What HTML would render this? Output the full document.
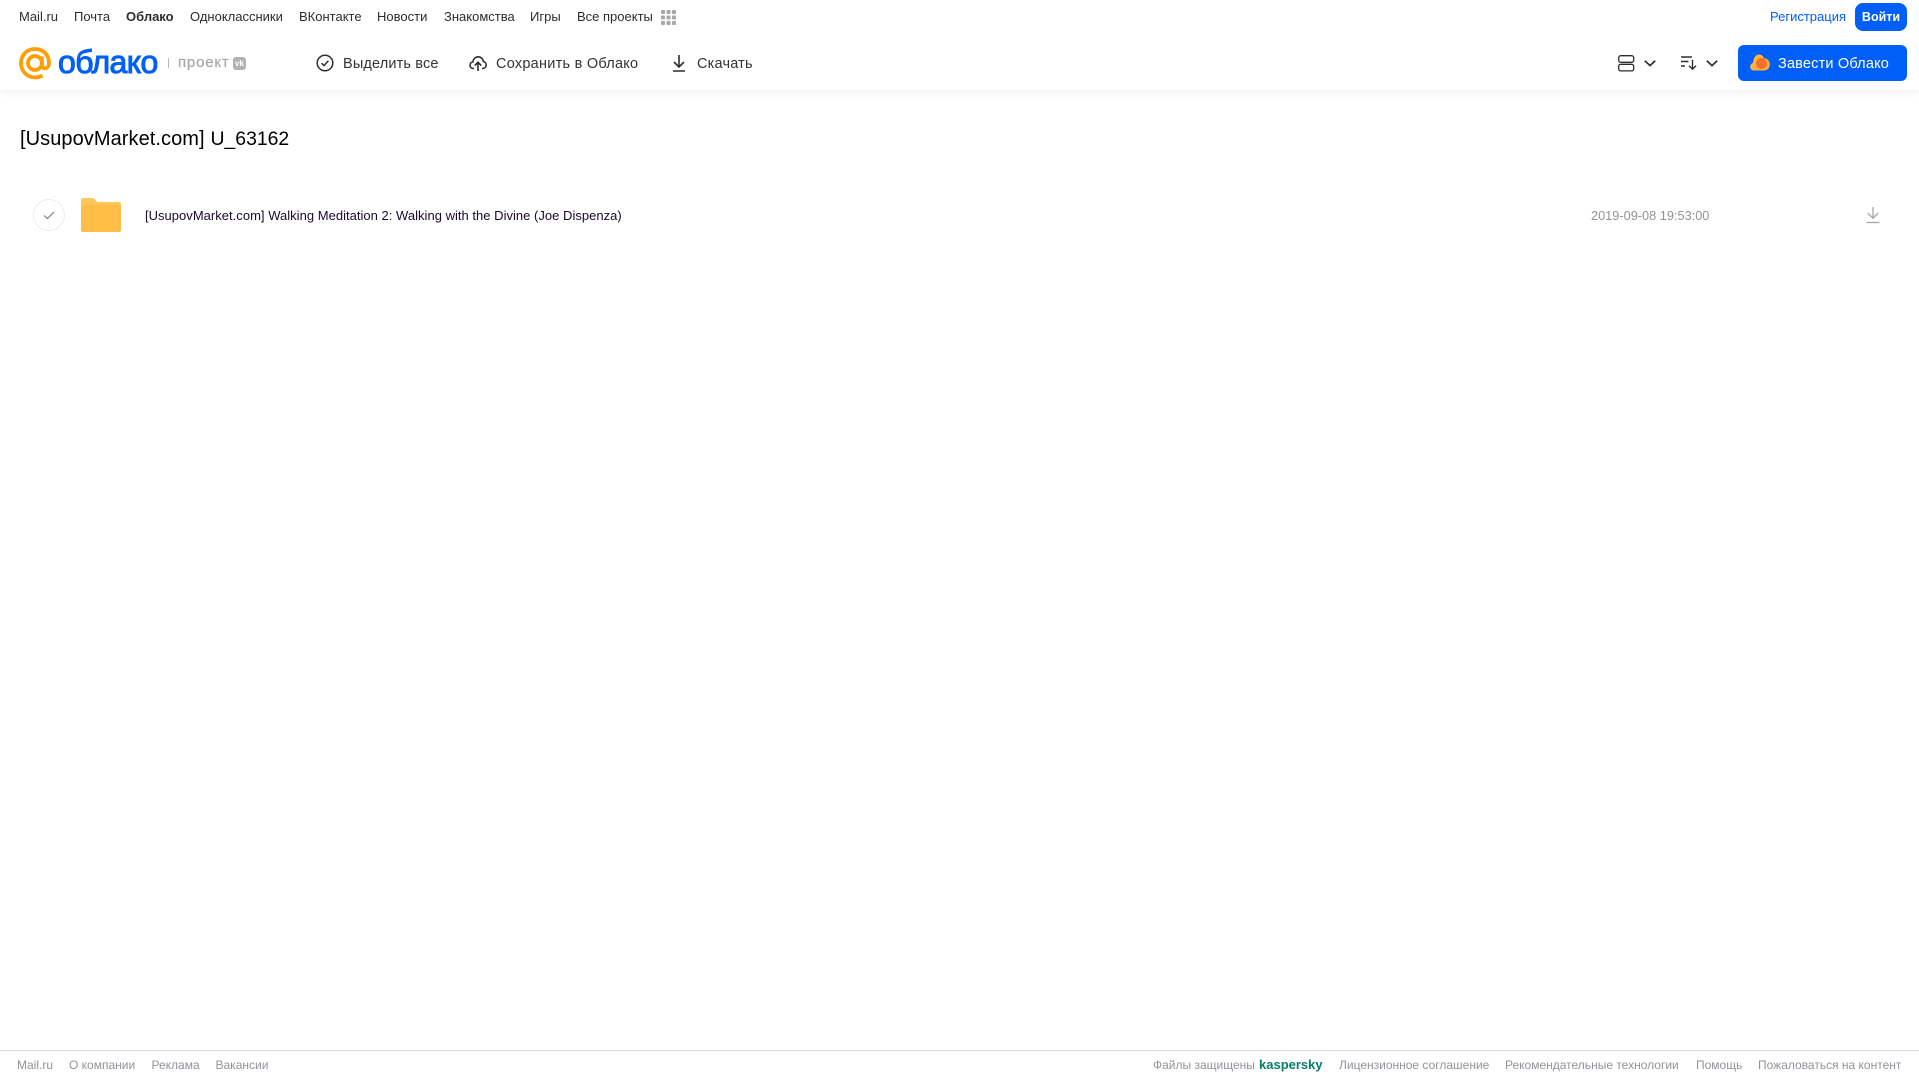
<!DOCTYPE html>
<html lang="ru"><head><meta charset="utf-8"><title>Облако</title>
<style>
html,body{margin:0;padding:0;background:#fff;width:1919px;height:1079px;overflow:hidden;font-family:"Liberation Sans",sans-serif}
.t{position:absolute;white-space:nowrap;line-height:20px}
.n{top:7px;font-size:13px;color:#2c2d2e}
.a{top:54px;font-size:14.5px;color:#333;letter-spacing:.2px}
.f{top:1055px;font-size:12px;color:#919399}
svg{position:absolute;overflow:visible}
#hdr{position:absolute;left:0;top:0;width:1919px;height:90px;background:#fff;box-shadow:0 2px 8px rgba(0,0,0,.07)}
</style></head><body>
<div id="hdr"></div>
<div class="t n" style="left:19px">Mail.ru</div>
<div class="t n" style="left:74px">Почта</div>
<div class="t n" style="left:126px;font-weight:bold">Облако</div>
<div class="t n" style="left:190px">Одноклассники</div>
<div class="t n" style="left:299px">ВКонтакте</div>
<div class="t n" style="left:377px">Новости</div>
<div class="t n" style="left:444px">Знакомства</div>
<div class="t n" style="left:530px">Игры</div>
<div class="t n" style="left:577px">Все проекты</div>
<svg style="left:661px;top:10px" width="15" height="15" fill="#a5a7ab"><rect x="0" y="0" width="4" height="4" rx="1"/><rect x="5.5" y="0" width="4" height="4" rx="1"/><rect x="11" y="0" width="4" height="4" rx="1"/><rect x="0" y="5.5" width="4" height="4" rx="1"/><rect x="5.5" y="5.5" width="4" height="4" rx="1"/><rect x="11" y="5.5" width="4" height="4" rx="1"/><rect x="0" y="11" width="4" height="4" rx="1"/><rect x="5.5" y="11" width="4" height="4" rx="1"/><rect x="11" y="11" width="4" height="4" rx="1"/></svg>
<div class="t" style="left:1770px;top:7px;font-size:13px;color:#005ff9">Регистрация</div>
<div class="t" style="left:1855px;top:3px;width:52px;height:28px;line-height:28px;text-align:center;background:#005ff9;border-radius:8px;color:#fff;font-size:12.5px;font-weight:bold">Войти</div>

<svg style="left:19px;top:47px" width="32" height="33" viewBox="0 0 32 33" fill="none" stroke="#ff9e00" stroke-width="3.8"><circle cx="16" cy="16" r="7"/><path d="M23 9.5V18.5C23 22.6 29.8 22.6 30 16.5 30.2 7.5 24 2 16 2 8 2 2 8 2 16 2 24 8 30.5 16 30.5 19 30.5 21.5 29.7 23.5 28.4"/></svg>
<div class="t" style="left:58px;top:46px;font-size:32px;line-height:32px;color:#005ff9;letter-spacing:-.6px;-webkit-text-stroke:1px #005ff9">облако</div>
<div style="position:absolute;left:168px;top:58px;width:1px;height:10px;background:#b5b7bb"></div>
<div class="t" style="left:178px;top:53px;font-size:15px;color:#a5a7ab;letter-spacing:.8px;-webkit-text-stroke:.2px #a5a7ab">проект</div>
<div style="position:absolute;left:233px;top:57px;width:13px;height:13px;border-radius:3px;background:#b0b2b6;color:#fff;font-size:8px;font-weight:bold;line-height:13px;text-align:center">vk</div>

<svg style="left:316px;top:54px" width="18" height="18" viewBox="0 0 18 18" fill="none" stroke="#2c2d2e" stroke-width="1.5"><circle cx="9" cy="9" r="7.8"/><path d="M5.6 9.2 8 11.6 12.4 6.8"/></svg>
<div class="t a" style="left:343px;letter-spacing:.15px">Выделить все</div>
<svg style="left:469px;top:54px" width="18" height="18" viewBox="0 0 18 18" fill="none" stroke="#2c2d2e" stroke-width="1.6"><path d="M5 14.5H4.5C2.4 14.5 1 13 1 11.2 1 9.5 2.2 8.2 3.8 8 4.2 5 6.3 2.8 9.2 2.8 12 2.8 14 4.8 14.4 7.5 16 7.8 17.2 9.3 17.2 11 17.2 13 15.8 14.5 13.8 14.5H13"/><path d="M9 17V8.5M5.8 11.5 9 8.3 12.2 11.5"/></svg>
<div class="t a" style="left:496px;letter-spacing:.25px">Сохранить в Облако</div>
<svg style="left:672px;top:54px" width="14" height="18" viewBox="0 0 14 18" fill="none" stroke="#2c2d2e" stroke-width="1.6"><path d="M7 1V12.5M2 8 7 13 12 8M1 17H13"/></svg>
<div class="t a" style="left:697px">Скачать</div>

<svg style="left:1618px;top:55px" width="17" height="17" viewBox="0 0 17 17" fill="none" stroke="#2c2d2e" stroke-width="1.3"><rect x=".7" y=".7" width="15" height="6.6" rx="2"/><rect x=".7" y="9.3" width="15" height="6.6" rx="2"/></svg>
<svg style="left:1644px;top:60px" width="12" height="7" fill="none" stroke="#2c2d2e" stroke-width="1.7"><path d="M.8 .8 6 5.6 11.2 .8"/></svg>
<svg style="left:1681px;top:56px" width="16" height="14" viewBox="0 0 16 14" fill="none" stroke="#2c2d2e" stroke-width="1.4"><path d="M0 1H11M0 5.5H7.5M0 10H4M11.5 4V13M8 9.8 11.5 13.2 15 9.8"/></svg>
<svg style="left:1706px;top:60px" width="12" height="7" fill="none" stroke="#2c2d2e" stroke-width="1.7"><path d="M.8 .8 6 5.6 11.2 .8"/></svg>
<div style="position:absolute;left:1738px;top:45px;width:169px;height:36px;border-radius:6px;background:#005ff9"></div>
<svg style="left:1750px;top:54px" width="20" height="17" viewBox="0 0 20 17"><path fill="#ffb13c" d="M4 16.5C1.8 16.5 .2 14.8 .2 12.7 .2 10.8 1.4 9.4 3 9 3.2 4.2 5.5 .5 9 .5 11.5 .5 13.3 2.2 14 4.2 17.2 4.4 19.8 6.8 19.8 10.5 19.8 14 17.2 16.5 14 16.5Z"/><circle cx="11.5" cy="9.5" r="5.5" fill="#f5702a"/></svg>
<div class="t" style="left:1778px;top:54px;font-size:14.5px;color:#fff;letter-spacing:.18px">Завести Облако</div>

<div class="t" style="left:20px;top:127px;font-size:20px;line-height:24px;color:#000;letter-spacing:.07px">[UsupovMarket.com]</div>
<div class="t" style="left:210.5px;top:127px;font-size:19.4px;line-height:24px;color:#000">U_63162</div>

<svg style="left:33px;top:199px" width="32" height="32" fill="none"><circle cx="16" cy="16" r="15.5" stroke="#ececee"/><path d="M11 16.5 14.5 19.5 21 13" stroke="#919399" stroke-width="1.4"/></svg>
<svg style="left:81px;top:198px" width="40" height="34" viewBox="0 0 40 34"><path fill="#ffc75a" d="M2 0H11C13 0 13.5 .8 14.5 2 15.5 3.2 16 4 18 4H38C39.2 4 40 4.8 40 6V12H0V2C0 .8.8 0 2 0Z"/><path fill="#ffbd45" d="M2 7H38C39.2 7 40 7.8 40 9V32C40 33.2 39.2 34 38 34H2C.8 34 0 33.2 0 32V9C0 7.8.8 7 2 7Z"/></svg>
<div class="t" style="left:145px;top:205.5px;font-size:13px;letter-spacing:.02px;color:#1a0a2e">[UsupovMarket.com] Walking Meditation 2: Walking with the Divine (Joe Dispenza)</div>
<div class="t" style="left:1591px;top:205.5px;font-size:12.75px;color:#919399">2019-09-08 19:53:00</div>
<svg style="left:1866px;top:206px" width="14" height="18" viewBox="0 0 14 18" fill="none" stroke="#a5a7ab" stroke-width="1.3"><path d="M7 1V12M1.8 7 7 12.2 12.2 7M.5 16.5H13.5" /></svg>

<div style="position:absolute;left:0;top:1050px;width:1919px;height:1px;background:#d8d9db"></div>
<div class="t f" style="left:17px">Mail.ru</div>
<div class="t f" style="left:69px">О компании</div>
<div class="t f" style="left:151.5px">Реклама</div>
<div class="t f" style="left:215.5px">Вакансии</div>
<div class="t f" style="left:1153px">Файлы защищены</div>
<div class="t" style="left:1259px;top:1055px;font-size:13px;font-weight:bold;color:#077d6a">kaspersky</div>
<div class="t f" style="left:1339px">Лицензионное соглашение</div>
<div class="t f" style="left:1505px">Рекомендательные технологии</div>
<div class="t f" style="left:1696px">Помощь</div>
<div class="t f" style="left:1758px">Пожаловаться на контент</div>
</body></html>
